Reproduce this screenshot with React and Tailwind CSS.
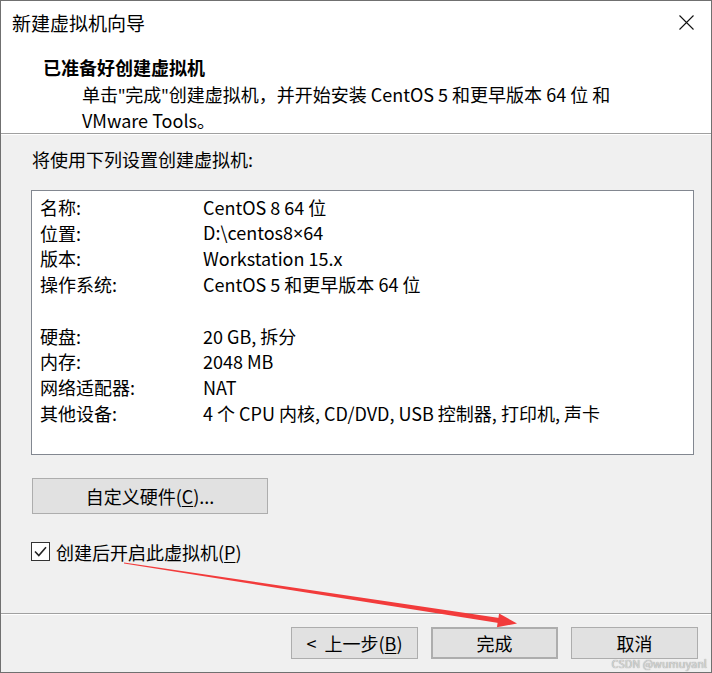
import React from "react";

const Latin = ({ children }) => <span className="font-['Noto_Sans',sans-serif]">{children}</span>;

const rows = [
    ["名称:", "CentOS 8 64 位"],
    ["位置:", <>D:\centos8<Latin>×</Latin>64</>],
    ["版本:", "Workstation 15.x"],
    ["操作系统:", "CentOS 5 和更早版本 64 位"],
    [null, null],
    ["硬盘:", "20 GB, 拆分"],
    ["内存:", "2048 MB"],
    ["网络适配器:", "NAT"],
    ["其他设备:", "4 个 CPU 内核, CD/DVD, USB 控制器, 打印机, 声卡"],
];

// Red annotation arrow drawn over the dialog
const Arrow = () => (
    <svg className="absolute left-0 top-0 pointer-events-none" width="712" height="673">
        <polygon points="123,561.6 123,562.6 497.6,622 498.4,617" fill="#f23b3b" />
        <polygon points="516,622.5 498.1,612.4 495.9,626.2" fill="#f23b3b" />
    </svg>
);

const Button = ({ children, className = "" }) => (
    <div className={`flex items-center justify-center bg-[#e1e1e1] border border-[#adadad] text-[18px] text-[#000] ${className}`}>
        {children}
    </div>
);

export default function App() {
    return (
        <div className="relative w-[712px] h-[673px] flex flex-col border border-[#707070] bg-[#f0f0f0] font-['Noto_Sans_CJK_SC',sans-serif] text-[18px] text-black overflow-hidden">

            {/* Title bar + header */}
            <div className="bg-white border-b border-[#a0a0a0] h-[133px] flex flex-col">
                <div className="h-[43px] flex items-center justify-between pl-[11px] pr-[17px]">
                    <span className="text-[19px] leading-none">新建虚拟机向导</span>
                    <svg width="15" height="15" viewBox="0 0 15 15">
                        <path d="M0.5 0.5 L14.5 14.5 M14.5 0.5 L0.5 14.5" stroke="#111" strokeWidth="1.1" />
                    </svg>
                </div>
                <div className="pl-[42px] pt-[10px] font-bold leading-[26px]">已准备好创建虚拟机</div>
                <div className="pl-[81px] pt-[2px] leading-[25px] pr-[60px]">
                    <div>单击<Latin>"</Latin>完成<Latin>"</Latin>创建虚拟机，并开始安装 CentOS 5 和更早版本 64 位 和</div>
                    <div>VMware Tools。</div>
                </div>
            </div>
            <div className="h-px bg-white" />

            {/* Body */}
            <div className="flex-1 flex flex-col pl-[30px] pr-[17px]">
                <div className="pl-[1px] pt-[12px] leading-[24px]">将使用下列设置创建虚拟机:</div>
                <div className="mt-[19px] h-[265px] bg-white border border-[#828790] pl-[8px] pt-[3px]">
                    {rows.map(([label, value], i) => (
                        <div key={i} className="flex h-[25.75px] items-center leading-none">
                            <span className="w-[163px] shrink-0">{label}</span>
                            <span>{value}</span>
                        </div>
                    ))}
                </div>
                <Button className="mt-[23px] ml-[1px] w-[236px] h-[36px]">
                    <span>自定义硬件(<span className="underline underline-offset-2">C</span>)...</span>
                </Button>
                <div className="mt-[28px] flex items-center">
                    <div className="w-[19px] h-[19px] border border-[#333] bg-white flex items-center justify-center">
                        <svg width="15" height="15" viewBox="0 0 15 15">
                            <path d="M2 7.5 L5.8 11.5 L13 3.2" stroke="#222" strokeWidth="1.6" fill="none" />
                        </svg>
                    </div>
                    <span className="ml-[6px] leading-none">
                        创建后开启此虚拟机(<span className="underline underline-offset-2">P</span>)
                    </span>
                </div>
            </div>

            {/* Footer */}
            <div className="border-t border-[#a0a0a0]">
                <div className="h-px bg-white" />
                <div className="h-[57px] flex items-start justify-end gap-[13px] pt-[12px] pr-[13px]">
                    <Button className="w-[127px] h-[32px]">
                        <span>&lt;&nbsp; 上一步(<span className="underline underline-offset-2">B</span>)</span>
                    </Button>
                    <Button className="w-[127px] h-[32px] border-2 border-[#0078d7]">完成</Button>
                    <Button className="relative w-[127px] h-[32px]">
                        取消
                        <span className="absolute right-[-10px] bottom-[-11px] text-[11px] leading-none text-[#d8d8d8] [text-shadow:0_0_1px_#777]">
                            CSDN @wumuyanl
                        </span>
                    </Button>
                </div>
            </div>

            <Arrow />
        </div>
    );
}
